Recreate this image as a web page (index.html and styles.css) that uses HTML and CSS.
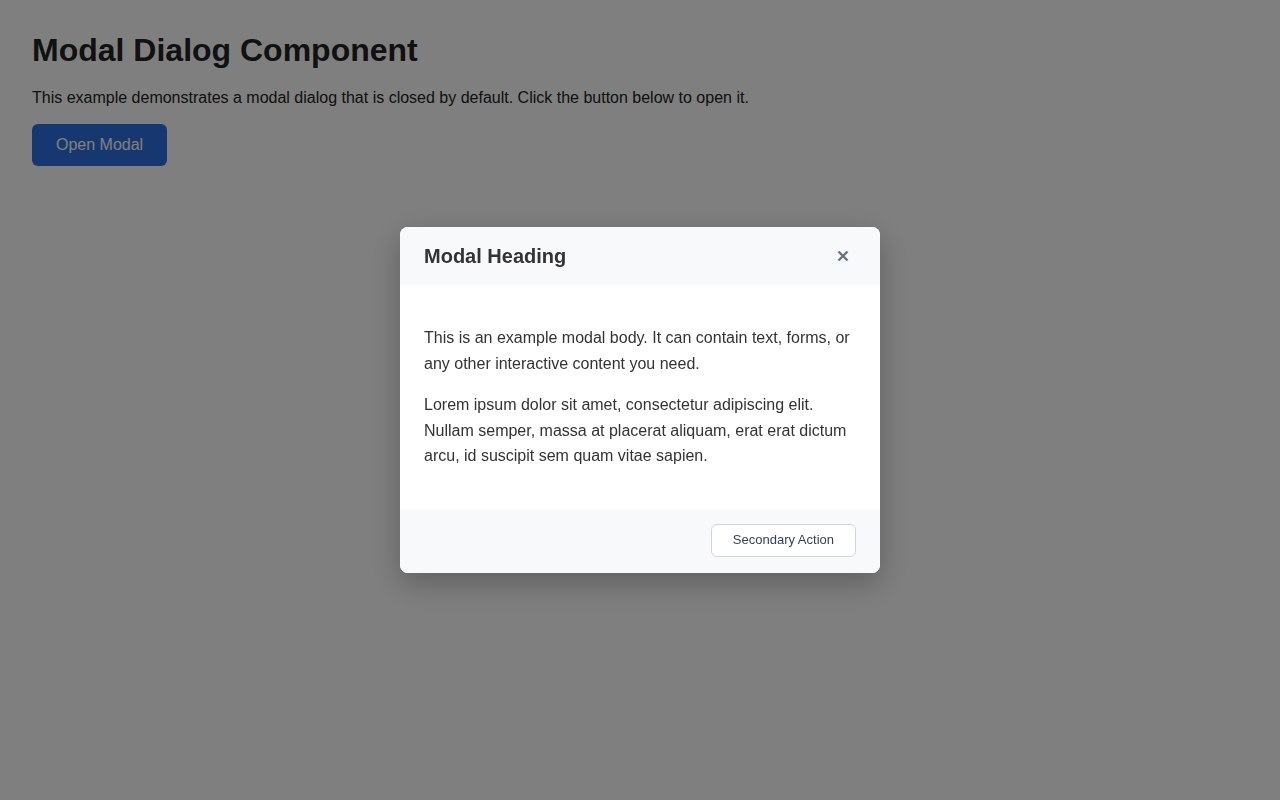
FILE: index.html
```html
<!DOCTYPE html>
<html lang="en">
<head>
<meta charset="utf-8">
<title>Modal Dialog Component</title>
<link rel="stylesheet" href="styles.css">
</head>
<body>
<main class="page">
  <h1 class="title">Modal Dialog Component</h1>
  <p class="intro">This example demonstrates a modal dialog that is closed by default. Click the button below to open it.</p>
  <button class="btn-primary" type="button">Open Modal</button>
</main>
<div class="overlay">
  <div class="modal" role="dialog" aria-labelledby="mh">
    <header class="modal-header">
      <h2 class="modal-title" id="mh">Modal Heading</h2>
      <button class="modal-close" type="button" aria-label="Close">
        <svg width="12" height="12" viewBox="0 0 12 12" aria-hidden="true"><path d="M1.5 1.5 L10.5 10.5 M10.5 1.5 L1.5 10.5" stroke="#6b7280" stroke-width="2.4" stroke-linecap="butt" fill="none"/></svg>
      </button>
    </header>
    <div class="modal-body">
      <p>This is an example modal body. It can contain text, forms, or any other interactive content you need.</p>
      <p>Lorem ipsum dolor sit amet, consectetur adipiscing elit. Nullam semper, massa at placerat aliquam, erat erat dictum arcu, id suscipit sem quam vitae sapien.</p>
    </div>
    <footer class="modal-footer">
      <button class="btn-secondary" type="button">Secondary Action</button>
    </footer>
  </div>
</div>
</body>
</html>
```
FILE: styles.css
```css
* { box-sizing: border-box; }
html, body { margin: 0; height: 100%; }
body {
  font-family: "Liberation Sans", Arial, sans-serif;
  background: #ffffff;
  color: #222222;
}
.page { padding: 32px; }
.title {
  margin: 0 0 18px;
  font-size: 32px;
  line-height: 36px;
  font-weight: 700;
  color: #222;
}
.intro {
  margin: 0 0 14px;
  font-size: 16px;
  line-height: 24px;
}
.btn-primary {
  font-family: inherit;
  font-size: 16px;
  line-height: 20px;
  padding: 11px 24px;
  border: 0;
  border-radius: 6px;
  background: #2f6fe0;
  color: #ffffff;
}
.overlay {
  position: fixed;
  inset: 0;
  background: rgba(0, 0, 0, 0.5);
  display: flex;
  align-items: center;
  justify-content: center;
}
.modal {
  width: 480px;
  background: #ffffff;
  border-radius: 8px;
  overflow: hidden;
  box-shadow: 0 10px 30px rgba(0, 0, 0, 0.25);
  color: #333333;
}
.modal-header {
  display: flex;
  align-items: center;
  justify-content: space-between;
  height: 58px;
  padding: 0 24px;
  background: #f8f9fb;
}
.modal-title {
  margin: 0;
  font-size: 20px;
  font-weight: 700;
  color: #333;
}
.modal-close {
  display: flex;
  align-items: center;
  justify-content: center;
  border: 0;
  background: none;
  padding: 0;
  width: 26px;
  height: 26px;
  cursor: pointer;
}
.modal-body {
  padding: 24px;
  font-size: 16px;
  line-height: 25.6px;
}
.modal-body p { margin: 16px 0; }
.modal-footer {
  display: flex;
  justify-content: flex-end;
  padding: 15px 24px 16px;
  background: #f8f9fb;
}
.btn-secondary {
  font-family: inherit;
  font-size: 13px;
  line-height: 16px;
  padding: 7px 21px 8px;
  border: 1px solid #d1d5db;
  border-radius: 6px;
  background: #ffffff;
  color: #374151;
}
```
